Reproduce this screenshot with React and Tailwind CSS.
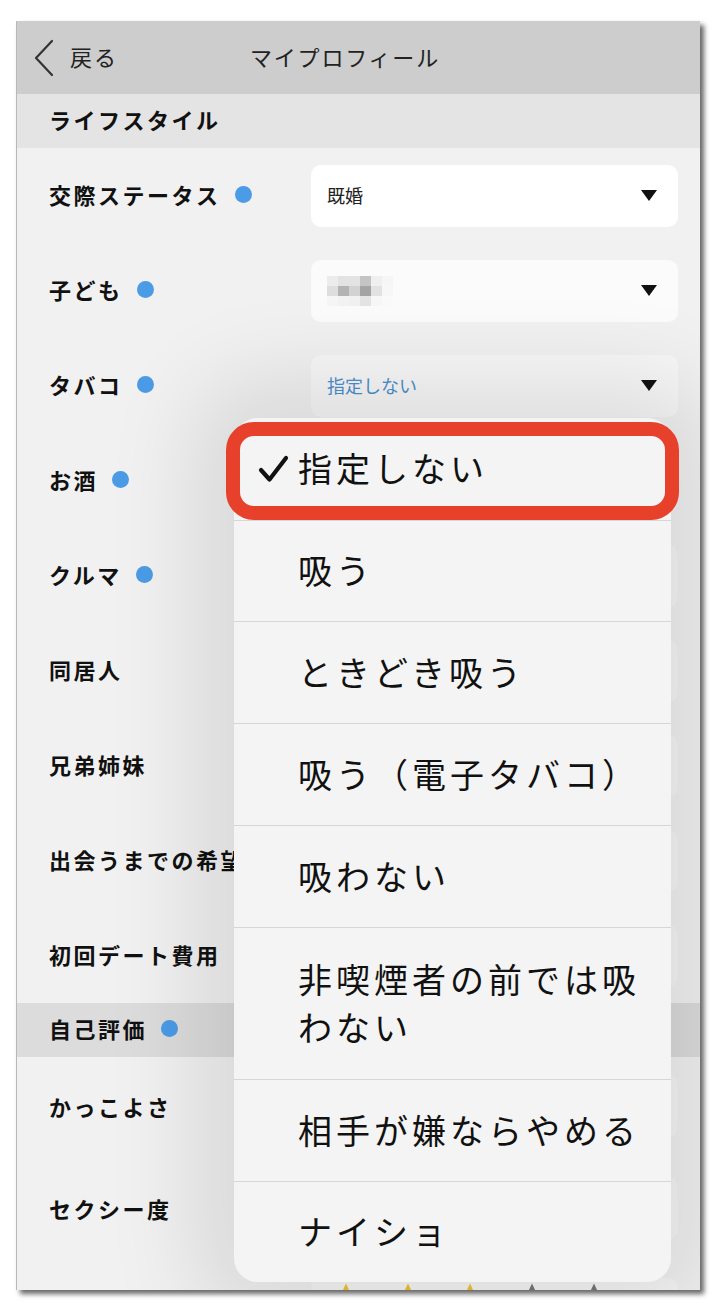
import React from "react";

const font = { fontFamily: '"Noto Sans CJK JP", "Noto Sans", sans-serif' };

function Dot() {
  return <span className="ml-[14px] inline-block h-[17px] w-[17px] shrink-0 rounded-full bg-[#4b9be6]" />;
}

function Tri() {
  return (
    <svg width="16" height="11" viewBox="0 0 16 11">
      <path d="M0 0 H16 L8 11 Z" fill="#111" />
    </svg>
  );
}

function Pixels() {
  const rows = [
    ["#ececec", "#e3e3e3", "#e3e3e3", "#c4c4c4", "#efefef", "#f6f6f6"],
    ["#dedede", "#b4b4b4", "#d2d2d2", "#a3a3a3", "#e2e2e2", "#f7f7f7"],
    ["#f6f6f6", "#f3f3f3", "#f1f1f1", "#e4e4e4", "#f7f7f7", "#fafafa"],
  ];
  return (
    <div className="flex flex-col">
      {rows.map((r, i) => (
        <div key={i} className="flex">
          {r.map((c, j) => (
            <span key={j} className="block h-[10px] w-[11px]" style={{ background: c }} />
          ))}
        </div>
      ))}
    </div>
  );
}

function Row({ label, dot, value, valueClass, selectBg, pixels }) {
  return (
    <div className="flex h-[95px] items-center justify-between pl-[32px] pr-[22px]">
      <div className="-mt-[3px] flex items-center text-[22px] font-bold tracking-[2.5px] text-[#111] whitespace-nowrap overflow-hidden">
        {label}
        {dot && <Dot />}
      </div>
      <div className={`flex h-[62px] w-[367px] shrink-0 items-center justify-between rounded-[10px] pl-[16px] pr-[21px] ${selectBg}`}>
        {pixels ? <Pixels /> : <span className={`text-[18px] ${valueClass}`}>{value}</span>}
        <Tri />
      </div>
    </div>
  );
}

function Star({ color }) {
  return (
    <svg width="40" height="40" viewBox="0 0 24 24">
      <path d="M12 1.5l3.1 6.6 7.2.9-5.3 5 1.4 7.1L12 17.6l-6.4 3.5L7 14l-5.3-5 7.2-.9z" fill={color} />
    </svg>
  );
}

function Check() {
  return (
    <svg width="31" height="30" viewBox="0 0 31 30" className="absolute left-[24px]">
      <path d="M3 16 L11.5 25.5 L28 4" fill="none" stroke="#111" strokeWidth="4.2" strokeLinecap="round" strokeLinejoin="round" />
    </svg>
  );
}

const items = [
  { h: "h-[102px]", lines: ["指定しない"], check: true },
  { h: "h-[101px]", lines: ["吸う"] },
  { h: "h-[102px]", lines: ["ときどき吸う"] },
  { h: "h-[102px]", lines: ["吸う（電子タバコ）"] },
  { h: "h-[102px]", lines: ["吸わない"] },
  { h: "h-[152px]", lines: ["非喫煙者の前では吸", "わない"] },
  { h: "h-[102px]", lines: ["相手が嫌ならやめる"] },
  { h: "h-[101px]", lines: ["ナイショ"] },
];

export default function App() {
  return (
    <div className="h-[1312px] w-[720px] bg-white pl-[16px] pt-[21px]" style={font}>
      <div className="relative h-[1269px] w-[684px] overflow-hidden border-l border-[#b8b8b8] bg-[#f1f1f1] shadow-[4px_4px_5px_rgba(0,0,0,0.6)]">
        {/* header */}
        <div className="relative flex h-[73px] items-center bg-[#cccdcc]">
          <svg width="22" height="38" viewBox="0 0 22 38" className="ml-[16px]">
            <path d="M19 2 L3 19 L19 36" fill="none" stroke="#333" strokeWidth="2.2" strokeLinecap="round" strokeLinejoin="round" />
          </svg>
          <span className="-mt-[2px] ml-[15px] text-[22px] tracking-[2px] text-[#222]">戻る</span>
          <span className="absolute left-[233px] -mt-[2px] text-[22px] tracking-[1.8px] text-[#222]">マイプロフィール</span>
        </div>
        {/* section */}
        <div className="flex h-[54px] items-center bg-[#e4e4e4] pb-[4px] pl-[32px] text-[22px] font-bold tracking-[2.5px] text-[#111]">
          ライフスタイル
        </div>
        <Row label="交際ステータス" dot value="既婚" valueClass="text-[#222]" selectBg="bg-white" />
        <Row label="子ども" dot pixels selectBg="bg-[#fbfbfb]" />
        <Row label="タバコ" dot value="指定しない" valueClass="text-[#4d8fd0]" selectBg="bg-[#f7f7f7]" />
        <Row label="お酒" dot value="" selectBg="bg-[#f6f6f6]" />
        <Row label="クルマ" dot value="" selectBg="bg-[#f6f6f6]" />
        <Row label="同居人" value="" selectBg="bg-[#f6f6f6]" />
        <Row label="兄弟姉妹" value="" selectBg="bg-[#f6f6f6]" />
        <Row label="出会うまでの希望" value="" selectBg="bg-[#f6f6f6]" />
        <Row label="初回デート費用" value="" selectBg="bg-[#f6f6f6]" />
        <div className="flex h-[54px] items-center bg-[#dcdcdc] pb-[4px] pl-[32px] text-[22px] font-bold tracking-[2.5px] text-[#111]">
          自己評価
          <Dot />
        </div>
        {["かっこよさ", "セクシー度"].map((l) => (
          <div key={l} className="flex h-[102px] items-start justify-between pl-[32px] pr-[22px] pt-[18px]">
            <div className="mt-[15px] text-[22px] font-bold tracking-[2.5px] text-[#111]">{l}</div>
            <div className="h-[62px] w-[367px] rounded-[10px] bg-[#f6f6f6]" />
          </div>
        ))}
        <div className="flex justify-end pr-[22px] pt-[17px]">
          <div className="flex h-[62px] w-[367px] gap-[22px] rounded-[10px] bg-[#f6f6f6] pl-[15px] pt-[3px]">
            <Star color="#f2c230" />
            <Star color="#f2c230" />
            <Star color="#f2c230" />
            <Star color="#777" />
            <Star color="#777" />
          </div>
        </div>

        {/* popover */}
        <div className="absolute left-[217px] top-[397px] w-[437px] overflow-hidden rounded-[24px] bg-[#f4f4f4] shadow-[0_0_90px_40px_rgba(0,0,0,0.10)]">
          {items.map((it, i) => (
            <div
              key={i}
              className={`relative flex ${it.h} flex-col justify-center pl-[64px] text-[34px] leading-[50px] tracking-[4px] text-[#111] ${i > 0 ? "border-t border-[#d6d6d6]" : ""}`}
            >
              {it.check && (
                <div className="absolute inset-y-0 left-0 flex items-center">
                  <Check />
                </div>
              )}
              {it.lines.map((t) => (
                <div key={t} className="-mt-[2px] whitespace-nowrap">{t}</div>
              ))}
            </div>
          ))}
        </div>

        {/* annotation */}
        <div className="absolute left-[209px] top-[401px] h-[98px] w-[453px] rounded-[28px] border-[14px] border-[#e8412b]" />
      </div>
    </div>
  );
}
